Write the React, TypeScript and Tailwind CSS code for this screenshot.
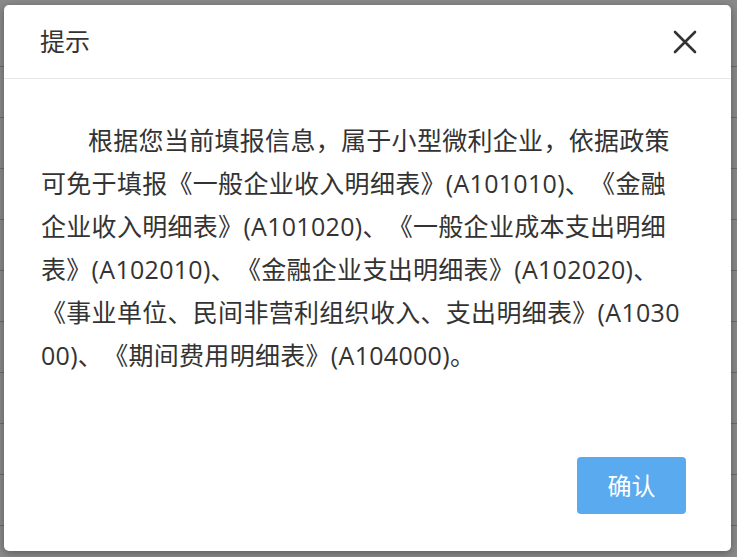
const bgRows = ['', '', '', '', '', '', '', '', '', '', '', '']

const lines = [
  '根据您当前填报信息，属于小型微利企业，依据政策',
  '可免于填报《一般企业收入明细表》(A101010)、《金融',
  '企业收入明细表》(A101020)、《一般企业成本支出明细',
  '表》(A102010)、《金融企业支出明细表》(A102020)、',
  '《事业单位、民间非营利组织收入、支出明细表》(A1030',
  '00)、《期间费用明细表》(A104000)。',
]

export default function App() {
  return (
    <div
      className="relative h-[557px] w-[737px] overflow-hidden bg-[#8a8a8a]"
      style={{ fontFamily: '"Open Sans", "Noto Sans CJK SC", sans-serif' }}
    >
      {/* page behind the overlay */}
      <div className="flex flex-col pt-[16px]">
        {bgRows.map((_, i) => (
          <div key={i} className="h-[51px] border-b border-[#6c6c6c]" />
        ))}
      </div>

      {/* dialog */}
      <div className="absolute left-[4px] top-[5px] flex h-[546px] w-[727px] flex-col rounded-[5px] bg-white shadow-[0_2px_8px_rgba(0,0,0,0.35)]">
        <div className="flex h-[74px] shrink-0 items-center justify-between border-b border-[#e8e8e8] pl-[36px] pr-[34px]">
          <h3 className="text-[25px] font-normal leading-none text-[#333]">提示</h3>
          <button type="button" className="flex h-[24px] w-[24px] items-center justify-center">
            <svg width="24" height="24" viewBox="0 0 24 24" fill="none" stroke="#333" strokeWidth="2.6" strokeLinecap="round">
              <path d="M2 2 22 22M22 2 2 22" />
            </svg>
          </button>
        </div>

        <div className="flex-1 pl-[37px] pr-[16px] pt-[40px]">
          <p className="text-[25px] leading-[43px] tracking-[0.3px] text-[#333] [text-spacing-trim:space-all]">
            {lines.map((line, i) => (
              <span key={i} className={i === 0 ? 'block whitespace-nowrap indent-[47px]' : 'block whitespace-nowrap'}>
                {line}
              </span>
            ))}
          </p>
        </div>

        <div className="flex justify-end pb-[37px] pr-[45px]">
          <button
            type="button"
            className="h-[57px] w-[109px] rounded-[4px] bg-[#5aaaf0] text-[24px] text-white"
          >
            确认
          </button>
        </div>
      </div>
    </div>
  )
}
